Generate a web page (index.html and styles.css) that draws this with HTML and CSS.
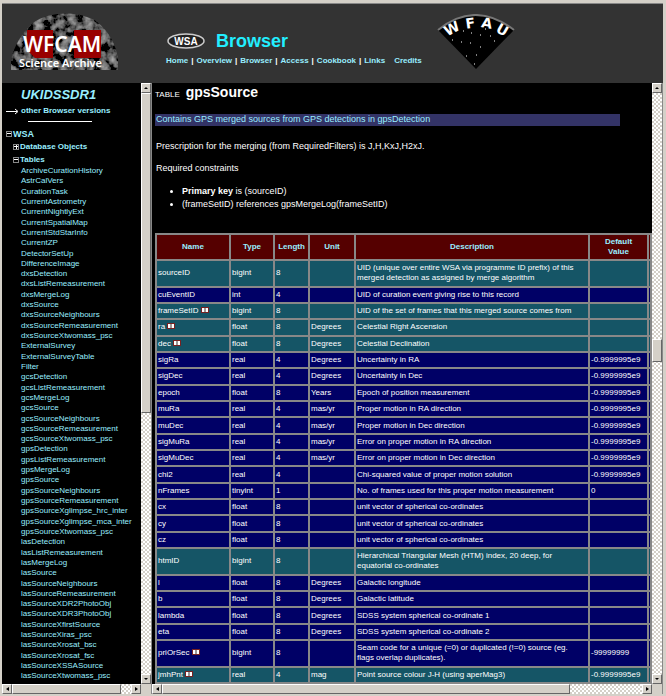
FILE: index.html
```html
<!DOCTYPE html>
<html lang="en">
    <head>
        <meta charset="utf-8">
        <title>WFCAM Science Archive - Browser</title>
        <link rel="stylesheet" href="styles.css">
    </head>
    <body>
        <header class="banner">
            <svg class="wfcam" viewBox="0 0 112 60" role="img" aria-label="WFCAM Science Archive">
                <defs>
                    <filter id="stars" x="0" y="0" width="1" height="1">
                        <feTurbulence type="fractalNoise" baseFrequency="0.12" numOctaves="3" seed="4"/>
                        <feColorMatrix type="matrix" values="0.8 0 0 0 -0.3  0.8 0 0 0 -0.3  0.8 0 0 0 -0.3  0 0 0 0 1"/>
                        <feComposite in2="SourceGraphic" operator="in"/>
                    </filter>
                </defs>
                <path d="M1 58V48C4 34 12 20 24 10C42-1 68-1 86 9C99 19 106 33 108 47V58Z" filter="url(#stars)"/>
                <path d="M17 18h26v28h-18l-8-8zM64 18h27v28h-27z" fill="#990000"/>
                <text x="13" y="40" font-size="21">WFCAM</text>
                <text x="9" y="55" font-size="11">Science Archive</text>
            </svg>
            <div class="heading">
                <div class="title">
                    <svg class="wsa" viewBox="0 0 40 18" role="img" aria-label="WSA">
                        <ellipse cx="20" cy="9" rx="18" ry="7" fill="#222222" stroke="#cccccc" stroke-width="1.500"/>
                        <text x="20" y="13" font-size="10" text-anchor="middle">WSA</text>
                    </svg>
                    <h1>Browser</h1>
                </div>
                <nav class="links">
                    <a href="#">Home</a>|<a href="#">Overview</a>|<a href="#">Browser</a>|<a href="#">Access</a>|<a href="#">Cookbook</a>|<a href="#">Links</a>
                    <a class="credits" href="#">Credits</a>
                </nav>
            </div>
            <svg class="wfau" viewBox="0 0 78 56" role="img" aria-label="WFAU">
                <path d="M1 16Q38-14 77 16L39 55Z" fill="#000000"/>
                <path d="M1 16Q38-14 77 16" fill="none" stroke="#777777" stroke-width="2"/>
                <g font-size="14" text-anchor="middle">
                    <text transform="translate(17 19) rotate(-28)">W</text>
                    <text transform="translate(34 14) rotate(-8)">F</text>
                    <text transform="translate(49 14) rotate(10)">A</text>
                    <text transform="translate(63 20) rotate(30)">U</text>
                </g>
                <path d="M26 17h1M34 19h1M43 21h1M53 22h1M15 26h1M24 28h1M33 29h1M57 27h1M43 33h1M29 42h1M39 41h1M37 50h1M48 15h1" stroke="#ffffff"/>
            </svg>
        </header>

        <main class="frames">
            <section class="frame contents">
                <div class="view sidebar">
                    <h2>UKIDSSDR1</h2>
                    <a class="versions" href="#"><svg viewBox="0 0 13 7"><path d="M0 3.5h11M9 1l3 2.500l-3 2.500" fill="none" stroke="#ffffff"/></svg>other Browser versions</a>
                    <hr>
                    <a class="branch root" href="#"><i class="box minus"></i>WSA</a>
                    <a class="branch" href="#"><i class="box plus"></i>Database Objects</a>
                    <a class="branch" href="#"><i class="box minus"></i>Tables</a>
                    <ul class="tables">
                        <li><a href="#">ArchiveCurationHistory</a></li>
                        <li><a href="#">AstrCalVers</a></li>
                        <li><a href="#">CurationTask</a></li>
                        <li><a href="#">CurrentAstrometry</a></li>
                        <li><a href="#">CurrentNightlyExt</a></li>
                        <li><a href="#">CurrentSpatialMap</a></li>
                        <li><a href="#">CurrentStdStarInfo</a></li>
                        <li><a href="#">CurrentZP</a></li>
                        <li><a href="#">DetectorSetUp</a></li>
                        <li><a href="#">DifferenceImage</a></li>
                        <li><a href="#">dxsDetection</a></li>
                        <li><a href="#">dxsListRemeasurement</a></li>
                        <li><a href="#">dxsMergeLog</a></li>
                        <li><a href="#">dxsSource</a></li>
                        <li><a href="#">dxsSourceNeighbours</a></li>
                        <li><a href="#">dxsSourceRemeasurement</a></li>
                        <li><a href="#">dxsSourceXtwomass_psc</a></li>
                        <li><a href="#">ExternalSurvey</a></li>
                        <li><a href="#">ExternalSurveyTable</a></li>
                        <li><a href="#">Filter</a></li>
                        <li><a href="#">gcsDetection</a></li>
                        <li><a href="#">gcsListRemeasurement</a></li>
                        <li><a href="#">gcsMergeLog</a></li>
                        <li><a href="#">gcsSource</a></li>
                        <li><a href="#">gcsSourceNeighbours</a></li>
                        <li><a href="#">gcsSourceRemeasurement</a></li>
                        <li><a href="#">gcsSourceXtwomass_psc</a></li>
                        <li><a href="#">gpsDetection</a></li>
                        <li><a href="#">gpsListRemeasurement</a></li>
                        <li><a href="#">gpsMergeLog</a></li>
                        <li><a href="#">gpsSource</a></li>
                        <li><a href="#">gpsSourceNeighbours</a></li>
                        <li><a href="#">gpsSourceRemeasurement</a></li>
                        <li><a href="#">gpsSourceXglimpse_hrc_inter</a></li>
                        <li><a href="#">gpsSourceXglimpse_mca_inter</a></li>
                        <li><a href="#">gpsSourceXtwomass_psc</a></li>
                        <li><a href="#">lasDetection</a></li>
                        <li><a href="#">lasListRemeasurement</a></li>
                        <li><a href="#">lasMergeLog</a></li>
                        <li><a href="#">lasSource</a></li>
                        <li><a href="#">lasSourceNeighbours</a></li>
                        <li><a href="#">lasSourceRemeasurement</a></li>
                        <li><a href="#">lasSourceXDR2PhotoObj</a></li>
                        <li><a href="#">lasSourceXDR3PhotoObj</a></li>
                        <li><a href="#">lasSourceXfirstSource</a></li>
                        <li><a href="#">lasSourceXiras_psc</a></li>
                        <li><a href="#">lasSourceXrosat_bsc</a></li>
                        <li><a href="#">lasSourceXrosat_fsc</a></li>
                        <li><a href="#">lasSourceXSSASource</a></li>
                        <li><a href="#">lasSourceXtwomass_psc</a></li>
                    </ul>
                </div>
                <div class="scroll vertical">
                    <button class="up" aria-label="Scroll up"></button>
                    <div class="track"><div class="thumb tall"></div></div>
                    <button class="down" aria-label="Scroll down"></button>
                </div>
                <div class="scroll horizontal">
                    <button class="left" aria-label="Scroll left"></button>
                    <div class="track"><div class="thumb most"></div></div>
                    <button class="right" aria-label="Scroll right"></button>
                </div>
            </section>

            <section class="frame detail">
                <div class="view page">
                    <h2><small>TABLE</small> gpsSource</h2>
                    <p class="summary">Contains GPS merged sources from GPS detections in gpsDetection</p>
                    <p>Prescription for the merging (from RequiredFilters) is J,H,KxJ,H2xJ.</p>
                    <p>Required constraints</p>
                    <ul class="constraints">
                        <li><b>Primary key</b> is (sourceID)</li>
                        <li>(frameSetID) references gpsMergeLog(frameSetID)</li>
                    </ul>
                    <div class="schema">
                    <table>
                        <colgroup>
                            <col class="name"><col class="type"><col class="length"><col class="unit"><col><col class="default"><col class="more">
                        </colgroup>
                        <thead>
                            <tr><th>Name</th><th>Type</th><th>Length</th><th>Unit</th><th>Description</th><th>Default<br>Value</th><th></th></tr>
                        </thead>
                        <tbody>
                            <tr class="indexed"><td>sourceID</td><td>bigint</td><td>8</td><td></td><td>UID (unique over entire WSA via programme ID prefix) of this<br>merged detection as assigned by merge algorithm</td><td></td><td></td></tr>
                            <tr><td>cuEventID</td><td>int</td><td>4</td><td></td><td>UID of curation event giving rise to this record</td><td></td><td></td></tr>
                            <tr class="indexed"><td>frameSetID <i class="book"></i></td><td>bigint</td><td>8</td><td></td><td>UID of the set of frames that this merged source comes from</td><td></td><td></td></tr>
                            <tr class="indexed"><td>ra <i class="book"></i></td><td>float</td><td>8</td><td>Degrees</td><td>Celestial Right Ascension</td><td></td><td></td></tr>
                            <tr class="indexed"><td>dec <i class="book"></i></td><td>float</td><td>8</td><td>Degrees</td><td>Celestial Declination</td><td></td><td></td></tr>
                            <tr><td>sigRa</td><td>real</td><td>4</td><td>Degrees</td><td>Uncertainty in RA</td><td>-0.9999995e9</td><td></td></tr>
                            <tr><td>sigDec</td><td>real</td><td>4</td><td>Degrees</td><td>Uncertainty in Dec</td><td>-0.9999995e9</td><td></td></tr>
                            <tr><td>epoch</td><td>float</td><td>8</td><td>Years</td><td>Epoch of position measurement</td><td>-0.9999995e9</td><td></td></tr>
                            <tr><td>muRa</td><td>real</td><td>4</td><td>mas/yr</td><td>Proper motion in RA direction</td><td>-0.9999995e9</td><td></td></tr>
                            <tr><td>muDec</td><td>real</td><td>4</td><td>mas/yr</td><td>Proper motion in Dec direction</td><td>-0.9999995e9</td><td></td></tr>
                            <tr><td>sigMuRa</td><td>real</td><td>4</td><td>mas/yr</td><td>Error on proper motion in RA direction</td><td>-0.9999995e9</td><td></td></tr>
                            <tr><td>sigMuDec</td><td>real</td><td>4</td><td>mas/yr</td><td>Error on proper motion in Dec direction</td><td>-0.9999995e9</td><td></td></tr>
                            <tr><td>chi2</td><td>real</td><td>4</td><td></td><td>Chi-squared value of proper motion solution</td><td>-0.9999995e9</td><td></td></tr>
                            <tr><td>nFrames</td><td>tinyint</td><td>1</td><td></td><td>No. of frames used for this proper motion measurement</td><td>0</td><td></td></tr>
                            <tr><td>cx</td><td>float</td><td>8</td><td></td><td>unit vector of spherical co-ordinates</td><td></td><td></td></tr>
                            <tr><td>cy</td><td>float</td><td>8</td><td></td><td>unit vector of spherical co-ordinates</td><td></td><td></td></tr>
                            <tr><td>cz</td><td>float</td><td>8</td><td></td><td>unit vector of spherical co-ordinates</td><td></td><td></td></tr>
                            <tr class="indexed"><td>htmID</td><td>bigint</td><td>8</td><td></td><td>Hierarchical Triangular Mesh (HTM) index, 20 deep, for<br>equatorial co-ordinates</td><td></td><td></td></tr>
                            <tr><td>l</td><td>float</td><td>8</td><td>Degrees</td><td>Galactic longitude</td><td></td><td></td></tr>
                            <tr><td>b</td><td>float</td><td>8</td><td>Degrees</td><td>Galactic latitude</td><td></td><td></td></tr>
                            <tr><td>lambda</td><td>float</td><td>8</td><td>Degrees</td><td>SDSS system spherical co-ordinate 1</td><td></td><td></td></tr>
                            <tr><td>eta</td><td>float</td><td>8</td><td>Degrees</td><td>SDSS system spherical co-ordinate 2</td><td></td><td></td></tr>
                            <tr><td>priOrSec <i class="book"></i></td><td>bigint</td><td>8</td><td></td><td>Seam code for a unique (=0) or duplicated (!=0) source (eg.<br>flags overlap duplicates).</td><td>-99999999</td><td></td></tr>
                            <tr class="indexed"><td>jmhPnt <i class="book"></i></td><td>real</td><td>4</td><td>mag</td><td>Point source colour J-H (using aperMag3)</td><td>-0.9999995e9</td><td></td></tr>
                        </tbody>
                    </table>
                    </div>
                </div>
                <div class="scroll vertical">
                    <button class="up" aria-label="Scroll up"></button>
                    <div class="track"><div class="thumb middle"></div></div>
                    <button class="down" aria-label="Scroll down"></button>
                </div>
                <div class="scroll horizontal">
                    <button class="left" aria-label="Scroll left"></button>
                    <div class="track"><div class="thumb wide"></div></div>
                    <button class="right" aria-label="Scroll right"></button>
                </div>
            </section>
        </main>
    </body>
</html>
```
FILE: styles.css
```css
*
{
    box-sizing: border-box;
}

body
{
    display: flex;
    flex-direction: column;
    height: 100vh;
    margin: 0;
    border: solid #d4d0c8;
    border-width: 3px 3px 2px 2px;
    overflow: hidden;

    background-color: #000000;
    color: #ffffff;
    font-family: "Liberation Sans", Arial, sans-serif;
    font-size: 8px;
    line-height: 10px;
}

a
{
    color: #99eeff;
    text-decoration: none;
}

h1, h2, p, ul
{
    margin: 0;
    padding: 0;
}

/* banner */

.banner
{
    display: flex;
    flex: none;
    height: 80px;
    border-top: 1px solid #888888;

    background-color: #333333;
}

.banner svg text
{
    fill: #ffffff;
    font-weight: bold;
}

.wfcam
{
    width: 112px;
    height: 60px;
    margin: 8px 0 0 8px;
}

.banner .wfcam text
{
    font-family: "Noto Sans", sans-serif;
    font-weight: 600;
}

.heading
{
    margin: 24px 0 0 44px;
    white-space: nowrap;
}

.title
{
    display: flex;
    align-items: center;
    gap: 10px;
}

.wsa
{
    width: 40px;
    height: 18px;
}

h1
{
    color: #22eeff;
    font-size: 18px;
    line-height: 26px;
}

.links
{
    display: flex;
    gap: 3px;

    font-weight: bold;
    line-height: 14px;
}

.credits
{
    margin-left: 6px;
}

.wfau
{
    width: 78px;
    height: 56px;
    margin: 10px 0 0 15px;
}

.wfau text
{
    font-family: "DejaVu Sans", sans-serif;
}

/* frames */

.frames
{
    display: grid;
    grid-template-columns: 149px 1fr;
    flex: 1;
    min-height: 0;
}

.frame
{
    display: grid;
    grid-template-columns: 1fr 10px;
    grid-template-rows: 1fr 10px;
    min-width: 0;
    min-height: 0;

    background-color: #d4d0c8;
}

.detail
{
    border: solid #888888;
    border-width: 0 1px;
}

.view
{
    display: flex;
    flex-direction: column;
    min-width: 0;
    min-height: 0;
    overflow: hidden;

    background-color: #000000;
}

.sidebar
{
    padding: 5px 0 2px 4px;
    white-space: nowrap;
}

.sidebar h2
{
    padding-left: 15px;

    color: #99eeff;
    font-size: 13px;
    font-style: italic;
    line-height: 14px;
}

.versions
{
    display: flex;
    align-items: center;
    margin-top: 4px;

    font-weight: bold;
}

.versions svg
{
    width: 13px;
    height: 7px;
    margin-right: 2px;
}

hr
{
    width: 64px;
    margin: 5px 0 5px 22px;
    border: 0;
    border-top: 1px solid #ffffff;
}

.branch
{
    display: flex;
    align-items: center;
    height: 13px;
    padding-left: 7px;

    font-weight: bold;
}

.root
{
    padding-left: 0;
    font-size: 9px;
}

.box
{
    width: 6px;
    height: 6px;
    margin-right: 1px;
    border: 1px solid #888888;

    background: linear-gradient(#ffffff, #ffffff) center / 4px 1px no-repeat;
}

.plus
{
    background: linear-gradient(#ffffff, #ffffff) center / 4px 1px no-repeat, linear-gradient(#ffffff, #ffffff) center / 1px 4px no-repeat;
}

.tables
{
    display: flex;
    flex: 1;
    flex-direction: column;
    justify-content: space-between;
    padding-left: 15px;

    list-style: none;
}

/* table description */

.page
{
    padding-left: 3px;

    font-size: 9px;
}

.page h2
{
    font-size: 14px;
    line-height: 18px;
}

.page h2 small
{
    margin-right: 2px;
    font-size: 8px;
    font-weight: normal;
}

.page p
{
    margin-bottom: 12px;
    padding-left: 1px;
}

.page .summary
{
    margin: 11px 32px 16px 0;
    padding: 0 1px 2px;

    background-color: #333366;
    color: #99eeff;
}

.page .summary
{
    margin-top: 10px;
    margin-bottom: 15px;
}

.constraints
{
    margin-bottom: 22px;
    padding-left: 27px;

    line-height: 13px;
}

.schema
{
    flex: 1;
    min-height: 0;
}

table
{
    width: 100%;
    height: 100%;
    border-spacing: 2px;
    table-layout: fixed;

    background-color: #888888;
    font-size: 8px;
}

col.name { width: 72px; }
col.type { width: 42px; }
col.length { width: 33px; }
col.unit { width: 44px; }
col.default { width: 57px; }
col.more { width: 1px; }

th, td
{
    height: 14px;
    padding: 2px 1px;

    background-color: #000066;
    text-align: left;
}

th:last-child, td:last-child
{
    padding: 0;
}

th
{
    background-color: #550000;
    color: #99eeff;
    text-align: center;
}

.indexed td
{
    background-color: #155566;
}

.book
{
    display: inline-block;
    width: 8px;
    height: 6px;
    border: 1px solid #772222;

    background: linear-gradient(90deg, #ffffff 2px, #999999 2px, #999999 4px, #ffffff 4px);
}

/* scroll bars */

.scroll
{
    display: flex;

    background-color: #d4d0c8;
}

.vertical
{
    flex-direction: column;
}

.horizontal
{
    grid-row: 2;
}

.scroll button
{
    display: grid;
    flex: none;
    place-items: center;
    width: 10px;
    height: 10px;
    padding: 0;
    border: 1px solid #666666;
    border-top-color: #ffffff;
    border-left-color: #ffffff;

    background-color: #d4d0c8;
}

.scroll button::before
{
    content: "";
    border: 2px solid transparent;
}

.scroll .up::before
{
    border-top-width: 0;
    border-bottom-color: #000000;
}

.scroll .down::before
{
    border-bottom-width: 0;
    border-top-color: #000000;
}

.scroll .left::before
{
    border-left-width: 0;
    border-right: 3px solid #000000;
}

.scroll .right::before
{
    border-right-width: 0;
    border-left: 3px solid #000000;
}

.track
{
    display: flex;
    flex: 1;
    flex-direction: inherit;

    background: conic-gradient(#ffffff 25%, #d4d0c8 0 50%, #ffffff 0 75%, #d4d0c8 0) 0 0 / 4px 4px;
}

.thumb
{
    border: 1px solid #666666;
    border-top-color: #ffffff;
    border-left-color: #ffffff;

    background-color: #d4d0c8;
}

.tall { height: 55%; }
.most { width: 92%; }
.wide { width: 85%; }

.middle
{
    height: 4%;
    margin-top: 246px;
}
```
